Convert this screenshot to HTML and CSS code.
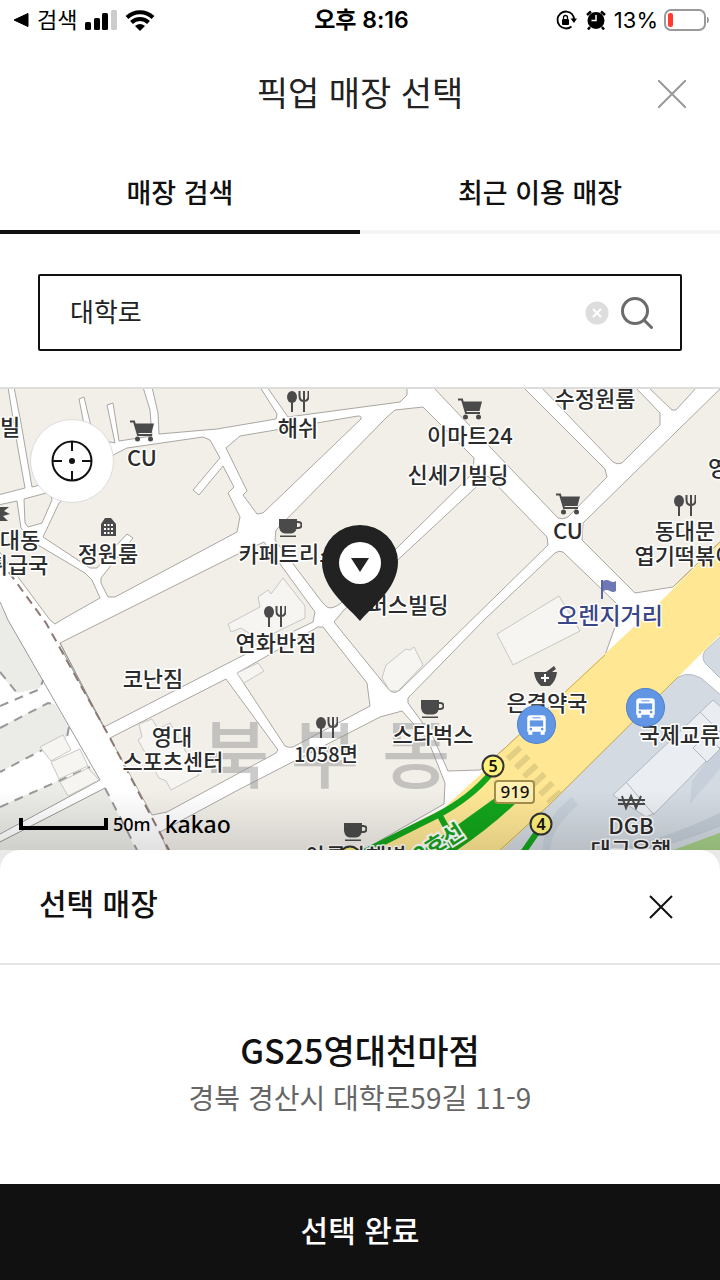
FILE: index.html
```html
<!DOCTYPE html>
<html lang="ko">
<head>
    <meta charset="UTF-8">
    <meta name="viewport" content="width=device-width, initial-scale=1.0">
    <title>픽업 매장 선택</title>
    <link rel="stylesheet" href="styles.css">
</head>
<body>
    <div class="status-bar">
        <div class="status-left">
            <svg width="16" height="16" viewBox="0 0 16 16"><path d="M1 8 15 1.500v13z" stroke="#000" stroke-linejoin="round"/></svg>
            <span>검색</span>
            <svg class="signal" width="32" height="20" viewBox="0 0 32 20">
                <rect y="12" width="6" height="8" rx="1.500"/>
                <rect x="9" y="8" width="6" height="12" rx="1.500"/>
                <rect x="17" y="3" width="6" height="17" rx="1.500"/>
                <rect x="26" width="6" height="20" rx="1.500" fill="#ccc"/>
            </svg>
            <svg width="30" height="22" viewBox="0 0 30 22">
                <path d="M2 8.500a18.500 18.500 0 0 1 26 0M6.500 13.500a12 12 0 0 1 17 0" fill="none" stroke="#000" stroke-width="4"/>
                <path d="M10 17q5-4 10 0l-5 5z"/>
            </svg>
        </div>
        <div class="status-time">오후 8:16</div>
        <div class="status-right">
            <svg width="22" height="20" viewBox="0 0 22 20">
                <path d="M16.500 4.500A8.500 8.500 0 1 0 15.500 16.500M16 4a8.500 8.500 0 0 1 2 6" fill="none" stroke="#000" stroke-width="1.800"/>
                <path d="M14.500 8.500h6.500l-3 4.500z"/>
                <rect x="6" y="9" width="7" height="6" rx="1"/>
                <path d="M7.500 9V7.500a2 2 0 0 1 4 0V9" fill="none" stroke="#000" stroke-width="1.300"/>
            </svg>
            <svg width="20" height="20" viewBox="0 0 20 20">
                <circle cx="10" cy="10.500" r="8.500"/>
                <path d="M1 5 5 1.500M19 5 15 1.500M4 17l-2 2.500M16 17l2 2.500" stroke="#000" stroke-width="2.500"/>
                <path d="M10 5v5.500H5.500" fill="none" stroke="#fff" stroke-width="1.500"/>
            </svg>
            <span>13%</span>
            <svg width="46" height="22" viewBox="0 0 46 22">
                <rect x="1" y="1" width="40" height="20" rx="6" fill="#fff" stroke="#999" stroke-width="2"/>
                <rect x="4" y="4" width="5" height="14" rx="2" fill="#ff3b30"/>
                <path d="M43.500 8q2 3 0 6z" fill="#999" stroke="#999"/>
            </svg>
        </div>
    </div>

    <header class="page-header">
        <h1>픽업 매장 선택</h1>
        <button class="icon-button" aria-label="닫기">
            <svg width="28" height="28" viewBox="0 0 28 28"><path d="M0 0 28 28M28 0 0 28" stroke="#999" stroke-width="2"/></svg>
        </button>
    </header>

    <nav class="tabs">
        <button class="tab active">매장 검색</button>
        <button class="tab">최근 이용 매장</button>
    </nav>

    <form class="search">
        <div class="search-box">
            <input type="text" value="대학로" aria-label="매장 검색어">
            <button type="button" class="clear" aria-label="지우기">
                <svg width="24" height="24" viewBox="0 0 24 24"><circle cx="12" cy="12" r="11.500" fill="#ddd"/><path d="m8 8 8 8m0-8-8 8" stroke="#fff" stroke-width="2"/></svg>
            </button>
            <button type="submit" class="find" aria-label="검색">
                <svg width="32" height="32" viewBox="0 0 32 32" fill="none" stroke="#6b6b6b" stroke-width="3" stroke-linecap="round"><circle cx="14" cy="14" r="12.500"/><path d="m23.500 23.500 7 7"/></svg>
            </button>
        </div>
    </form>

    <main class="map">
        <svg class="map-canvas" viewBox="0 389 720 461" preserveAspectRatio="xMidYMid slice">
            <defs>
                <linearGradient id="shade" x1="0" y1="0" x2="0" y2="1">
                    <stop offset="0" stop-opacity="0"/>
                    <stop offset="1" stop-opacity=".12"/>
                </linearGradient>
                <symbol id="cart" viewBox="0 0 24 22">
                    <path d="M0 1.500h4L8 15h14" fill="none" stroke="#4a4a4a" stroke-width="2"/>
                    <path d="M5 3.500h19L21.500 13H8z"/>
                    <circle cx="7.500" cy="19" r="2.500"/><circle cx="20.500" cy="19" r="2.500"/>
                </symbol>
                <symbol id="food" viewBox="0 0 22 21">
                    <ellipse cx="5" cy="6" rx="5" ry="6"/>
                    <path d="M5 10v11M17 10v11M12.500 0v5q0 5 4.500 5t4.500-5V0M17 0v10" fill="none" stroke="#4a4a4a" stroke-width="2"/>
                </symbol>
                <symbol id="cup" viewBox="0 0 23 19">
                    <path d="M0 0h18v8q-1 6-6 6.500H6Q1 14 0 8z"/>
                    <path d="M17 3h2.500a2.500 2.500 0 0 1 0 6H17" fill="none" stroke="#4a4a4a" stroke-width="2"/>
                    <path d="M1 16.500h16V18H1z"/>
                </symbol>
                <symbol id="bus" viewBox="0 0 38 38">
                    <circle cx="19" cy="19" r="18.500" fill="#6096e4" stroke="#4e83cf"/>
                    <path d="M13 10h12q3 0 3 3v13H10V13q0-3 3-3zM11 25h4v4h-4zM23 25h4v4h-4z" fill="#fff"/>
                    <path d="M12.500 15h13v6h-13z" fill="#6096e4"/>
                    <path d="M15 12.500h8" stroke="#6096e4"/>
                    <circle cx="13.500" cy="23.500" r="1.300" fill="#6096e4"/><circle cx="24.500" cy="23.500" r="1.300" fill="#6096e4"/>
                </symbol>
            </defs>

            <rect y="389" width="720" height="461" fill="#fff"/>

            <g class="block">
                <path d="M-2 387H8l9 56 8 45-27 7z"/>
                <path d="M14 387l7 36 11 64 28-7 31-20-12-61 5-2 10 42 21 4-8-38 6-2 6 38 33-5-2-26-7-23z"/>
                <path d="M152 387l6 26 1 21 58-5 59-10 1-5-17-27z"/>
                <path d="M267 387l21 30 112-15 7-7v-8z"/>
                <path d="M115 454l12-6 76-11 7 3 10 18-27 32 6 5 24-29 11 21-6 6 12 24-3 15-122 65h-7l-7-14v-5l15-19 17-21-6-4-12 13-18 21h-7l-47-31 16-34z"/>
                <path d="M240 436l118-20q4 0 3 3l-98 94-6 1-14-19 4-4-21-43z"/>
                <path d="M395 410l28-3 51 51-1 15-132 130q-9 7-14 4l-5-5-47-62 1-10 111-113z"/>
                <path d="M488 476l59 61 1 8-148 145q-5 4-10 1l-56-69 10-12z"/>
                <path d="M433 387l57 60 68 71q5 2 10-1l39-40-2-8-82-82z"/>
                <path d="M541 387l72 75q4 3 9 1l38-38v-12l-25-26z"/>
                <path d="M648 387l24 23h4l21-23z"/>
                <path d="M722 387L583 523l-1 17 53 53 38-6 49-47z"/>
                <path d="M485 619l70-66q4-3 8-1l54 52-2 23-10 28-100 93-25 22-32 1-15-34-25-34v-5z"/>
                <path d="M237 673l81-46h5l44 56 3 23-77 41q-5 1-8-1z"/>
                <path d="M60 643l180-90 24-11 51 70-2 10-73 35-136 70z"/>
                <path d="M-2 505l19-4 4 27 17 17 47 28 7 7 8 18-37 21-8 5-5-4-52-70z"/>
                <path d="M24 499l26-7 2 8-10 23-14 4-3-4z"/>
                <path d="M110 738l116-59 52 71-2 3-109 59-15 3z"/>
                <path d="M160 832l80-43 140-72 22-6 26 29 17 43-1 21-84 48H168z"/>
            </g>

            <!-- campus side -->
            <g class="campus">
                <path d="M-2 602l10 18 35 60-3 8-23 5-19-21z"/>
                <path d="M-2 728l50-25 7 1 14 23-2 10-69 36z"/>
                <path d="M-2 807l92-40 10 13-102 54z"/>
                <path d="M-2 842l107-54 32 64H-2z"/>
            </g>
            <g class="line">
                <path d="M0 602l8 18 92 160M0 834l100-54M0 842l105-54"/>
                <path d="M60 643l44 84M62 650l40 74" />
            </g>
            <g class="line dashed">
                <path d="M0 672l17 21M0 706l40-17 3-9M0 728l48-25 7 1M69 727l-2 10L0 772M0 807l90-40M105 788l32 62"/>
            </g>
            <path class="boundary" d="M0 560l46 63 64 115 60 114"/>

            <!-- buildings -->
            <g class="building">
                <path d="M40 747l23-12 8 15-20 11zM51 762l29-13 8 17-29 13zM60 782l28-14 11 12-31 16z"/>
                <path d="M139 724l13-5 6 10 12-6 29 52-28 15-5-9-7-3-21-38 4-3z"/>
                <path d="M258 597l10-7 3 4 12-16 22 28v12l-45 22-19-12-10 4-3-8 32-17z"/>
                <path d="M382 678l4-13 20-16 4 1 4-3 9 18-25 26h-8z"/>
                <path d="M497 634l62-38 21 35-67 34z"/>
                <path d="M237 673l7 10 20-12-6-8z"/>
            </g>

            <!-- east side of the main road -->
            <g fill="#d3dae1" stroke="#b4bbc3">
                <path d="M498 852l49-45 131-130q8-4 15-2l8 3 21 18v156z"/>
                <path d="M722 635l-17 16q-4 6 0 12l17 17z"/>
            </g>
            <path d="M550 852q0-23 28-47l-6-8q-30 22-29 55zM690 804l32-38v-25l-30 40z" fill="#c7d0da"/>
            <path d="M600 852q60-10 122-40v14q-50 20-85 26z" fill="#c3ccd6"/>
            <path d="M668 852l54-20v20z" fill="#a5cf88"/>
            <g fill="#eaeef2" stroke="#b2b7bc">
                <path d="M613 795l100-95 9 8v37l-67 68-9 4z"/>
                <path d="M626 782l28 33M700 712l22 22M693 748l14-14 13 15-13 13z"/>
            </g>

            <!-- main road -->
            <path d="M722 540l-62 62-155 146-25 27-36 33-84 44h140l47-45 131-130 44-44z" fill="#ffe794"/>
            <path d="M605 655L505 748l-25 22M498 852l49-45 131-130M720 634v1M673 587l49-47" fill="none" stroke="#c9ac58"/>
            <path d="M512 751l43 47" stroke="#e3cf84" stroke-width="17" stroke-dasharray="6 6"/>
            <g fill="none" stroke="#13a51c" stroke-width="6">
                <path d="M352 858l84-42q35-18 56-44"/>
                <path d="M439 814l12 22M522 854l18-26"/>
            </g>
            <path d="M420 852l75-54 22 4q-28 27-63 50z" fill="#13a51c"/>

            <g class="area-name">
                <text x="235" y="782">북</text>
                <text x="325" y="782">부</text>
                <text x="416" y="782">동</text>
            </g>

            <g fill="#4a4a4a">
                <use href="#cart" x="130" y="420" width="24" height="22"/>
                <use href="#cart" x="458" y="398" width="24" height="22"/>
                <use href="#cart" x="556" y="493" width="24" height="22"/>
                <use href="#food" x="287" y="391" width="22" height="21"/>
                <use href="#food" x="264" y="606" width="22" height="21"/>
                <use href="#food" x="316" y="717" width="22" height="21"/>
                <use href="#food" x="674" y="495" width="22" height="21"/>
                <use href="#cup" x="279" y="519" width="23" height="19"/>
                <use href="#cup" x="421" y="700" width="23" height="19"/>
                <use href="#cup" x="344" y="823" width="23" height="19"/>
                <path d="M101 524l4-6h6l5 6v12h-15z"/>
                <path d="M104 525h9M104 529h9M104 533h9" stroke="#fff" stroke-width="2" stroke-dasharray="2 1.500"/>
                <path d="M0 507h9l-5 4 6 3-7 2 5 5H0z"/>
                <path d="M534 672h12l8-6 2 3-4 3h5q-1 9-7 14h-9q-6-5-7-14z"/>
                <path d="M545 674v8M541 678h8" stroke="#fff" stroke-width="2"/>
                <path d="M622 796l4 12 5-12 5 12 5-12M618 800h27M618 804h27" fill="none" stroke="#4a4a4a" stroke-width="2"/>
            </g>
            <path d="M602 580v19" stroke="#5965a3" stroke-width="2"/>
            <path d="M603 581q4-2 7 0t6 0v10q-3 2-6 0t-7 0z" fill="#6d78b4"/>

            <g class="label">
                <text x="10" y="435">빌</text>
                <text x="142" y="466">CU</text>
                <text x="298" y="436">해쉬</text>
                <text x="470" y="444">이마트24</text>
                <text x="458" y="483">신세기빌딩</text>
                <text x="595" y="407">수정원룸</text>
                <text x="568" y="539">CU</text>
                <text x="718" y="476">영</text>
                <text x="685" y="539">동대문</text>
                <text x="685" y="564">엽기떡볶이</text>
                <text x="20" y="548">대동</text>
                <text x="18" y="573">취급국</text>
                <text x="108" y="562">정원룸</text>
                <text x="289" y="562">카페트리스</text>
                <text x="408" y="613">퍼스빌딩</text>
                <text x="276" y="651">연화반점</text>
                <text x="153" y="687">코난짐</text>
                <text x="172" y="745">영대</text>
                <text x="173" y="770">스포츠센터</text>
                <text class="narrow" x="326" y="762">1058면</text>
                <text x="433" y="743">스타벅스</text>
                <text x="547" y="711">은결약국</text>
                <text x="690" y="743">국제교류센</text>
                <text x="631" y="834">DGB</text>
                <text x="631" y="858">대구은행</text>
                <text x="356" y="864">아름다해병</text>
                <text class="street" x="610" y="624">오렌지거리</text>
            </g>
            <text class="subway-line" transform="translate(420 864) rotate(-32)">2호선</text>

            <use href="#bus" x="517" y="705" width="39" height="39"/>
            <use href="#bus" x="626" y="688" width="39" height="39"/>
            <g class="exit">
                <circle cx="493" cy="766" r="10.500"/><text x="493" y="772">5</text>
                <circle cx="541" cy="824" r="10.500"/><text x="541" y="830">4</text>
                <circle cx="350" cy="857" r="10.500"/>
                <rect x="495" y="781" width="39" height="22" rx="3" stroke="#a38f4c"/>
                <text class="route" x="515" y="798">919</text>
            </g>
            <rect y="790" width="720" height="60" fill="url(#shade)"/>

            <path d="M360 621c-9-12-38-31-38-59a38 37 0 0 1 76 0c0 28-29 47-38 59z" fill="#222"/>
            <circle cx="360" cy="563" r="21" fill="#fff"/>
            <path d="M351 558h18l-9 14z" fill="#222"/>
        </svg>

        <button class="locate" aria-label="현재 위치">
            <svg width="42" height="42" viewBox="0 0 42 42" fill="none" stroke="#111" stroke-width="2"><circle cx="21" cy="21" r="19.500"/><path d="M21 1v10M21 31v10M1 21h10M31 21h10"/><circle cx="21" cy="21" r="3" fill="#111" stroke="none"/></svg>
        </button>
        <div class="map-credit">
            <span class="scale-bar"></span>
            <span class="scale">50m</span>
            <span class="brand">kakao</span>
        </div>
    </main>

    <section class="sheet">
        <div class="sheet-card">
            <div class="sheet-header">
                <h2>선택 매장</h2>
                <button class="icon-button" aria-label="선택 매장 닫기">
                    <svg width="24" height="24" viewBox="0 0 24 24"><path d="m1 1 22 22M23 1 1 23" stroke="#111" stroke-width="2"/></svg>
                </button>
            </div>
            <div class="store">
                <h3>GS25영대천마점</h3>
                <p>경북 경산시 대학로59길 11-9</p>
            </div>
        </div>
    </section>

    <button class="confirm">선택 완료</button>
</body>
</html>
```

FILE: styles.css
```css
* {
    box-sizing: border-box;
}

body {
    display: flex;
    flex-direction: column;
    min-height: 100vh;
    margin: 0;
    background-color: #fff;
    color: #111;
    font-family: "Noto Sans CJK KR", sans-serif;
}

h1,
h2,
h3,
p {
    margin: 0;
}

button {
    display: flex;
    align-items: center;
    justify-content: center;
    padding: 0;
    border: none;
    background: none;
    color: inherit;
    font-family: inherit;
    cursor: pointer;
}

svg {
    display: block;
}

.status-bar {
    display: grid;
    grid-template-columns: 1fr auto 1fr;
    align-items: center;
    height: 40px;
    padding: 0 10px 0 13px;
    color: #000;
    font-family: Inter, "Noto Sans CJK KR", sans-serif;
    font-size: 22px;
    line-height: 32px;
}

.status-left,
.status-right {
    display: flex;
    align-items: center;
    gap: 8px;
}

.status-right {
    justify-content: flex-end;
}

.status-right svg:last-child {
    margin-left: -2px;
}

.status-time {
    font-size: 23px;
    font-weight: 600;
}

.page-header {
    display: grid;
    grid-template-columns: 1fr auto 1fr;
    align-items: center;
    height: 108px;
    padding: 0 34px;
}

.page-header h1 {
    grid-column: 2;
    padding-bottom: 4px;
    color: #222;
    font-size: 34px;
    font-weight: 400;
    line-height: 48px;
}

.page-header .icon-button {
    justify-self: end;
}

.tabs {
    display: flex;
}

.tab {
    flex: 1;
    height: 86px;
    padding-top: 4px;
    border-bottom: 4px solid #f5f5f5;
    font-size: 27px;
    font-weight: 500;
}

.tab.active {
    border-color: #111;
}

.search {
    padding: 40px 38px 36px;
    border-bottom: 2px solid #ddd;
}

.search-box {
    display: flex;
    align-items: center;
    height: 77px;
    padding: 0 27px 0 30px;
    border: 2px solid #111;
    border-radius: 2px;
}

.search-box input {
    flex: 1;
    min-width: 0;
    padding: 0 0 4px;
    border: none;
    outline: none;
    color: #222;
    font-family: inherit;
    font-size: 26px;
}

.search-box .find {
    margin-left: 12px;
}

.map {
    position: relative;
    flex: 1;
    min-height: 461px;
    overflow: hidden;
}

.map-canvas {
    position: absolute;
    width: 100%;
    height: 100%;
}

.block path {
    fill: #f2efe9;
    stroke: #aaa7a3;
    stroke-linejoin: round;
}

.campus path {
    fill: #ebece7;
}

.line {
    fill: none;
    stroke: #999;
}

.dashed {
    stroke-width: 2;
    stroke-dasharray: 9 7;
}

.boundary {
    fill: none;
    stroke: #8d7974;
    stroke-width: 2;
    stroke-dasharray: 9 6;
}

.building {
    fill: #f6f5f2;
    stroke: #c9c7c4;
}

.area-name {
    fill: #8c8c8c;
    fill-opacity: .45;
    font-size: 74px;
    font-weight: 500;
    text-anchor: middle;
}

.label {
    fill: #2b2b2b;
    stroke: #fff;
    stroke-width: 3px;
    stroke-linejoin: round;
    paint-order: stroke;
    font-size: 22px;
    font-weight: 500;
    text-anchor: middle;
}

.narrow {
    font-size: 20px;
}

.street {
    fill: #3a4688;
    font-size: 23px;
}

.subway-line {
    fill: #13a51c;
    stroke: #fff;
    stroke-width: 4px;
    paint-order: stroke;
    font-size: 22px;
    font-weight: 700;
}

.exit {
    fill: #fff27a;
    stroke: #333;
    stroke-width: 2px;
    font-family: "Noto Sans", sans-serif;
    font-size: 16px;
    font-weight: 600;
    text-anchor: middle;
}

.exit rect {
    fill: #ffefb0;
}

.exit text {
    fill: #111;
    stroke: none;
}

.exit .route {
    font-size: 17px;
    font-weight: 500;
}

.locate {
    position: absolute;
    top: 30px;
    left: 30px;
    width: 84px;
    height: 84px;
    border: 1px solid #ddd;
    border-radius: 50%;
    background-color: #fff;
}

.map-credit {
    position: absolute;
    bottom: 12px;
    left: 19px;
    display: flex;
    align-items: center;
    color: #000;
    font-family: "Noto Sans", sans-serif;
    line-height: 28px;
}

.scale-bar {
    width: 89px;
    height: 12px;
    border: 4px solid #000;
    border-top: none;
}

.scale {
    margin: 0 14px 0 5px;
    font-size: 18px;
    font-weight: 500;
}

.brand {
    font-size: 23px;
    font-weight: 500;
}

.sheet {
    background-color: #e9e9e7;
}

.sheet-card {
    border-radius: 20px 20px 0 0;
    background-color: #fff;
}

.sheet-header {
    display: flex;
    align-items: center;
    justify-content: space-between;
    height: 115px;
    padding: 0 47px 0 39px;
    border-bottom: 2px solid #e5e5e5;
}

.sheet-header h2 {
    padding-bottom: 10px;
    font-size: 30px;
    font-weight: 500;
}

.store {
    padding: 58px 20px 66px;
    text-align: center;
}

.store h3 {
    font-size: 34px;
    font-weight: 500;
    line-height: 54px;
}

.store p {
    color: #666;
    font-size: 28px;
    font-weight: 400;
    line-height: 41px;
}

.confirm {
    height: 96px;
    padding-bottom: 6px;
    background-color: #111;
    color: #fff;
    font-size: 30px;
    font-weight: 500;
}
```
